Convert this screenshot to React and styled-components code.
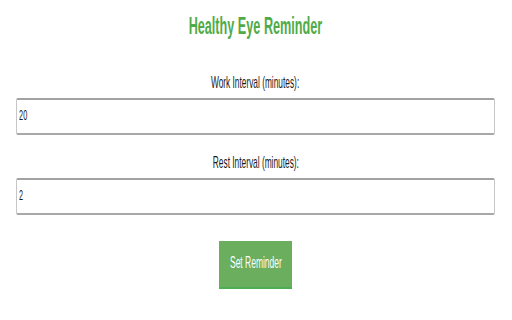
import React, { useState } from "react";
import styled, { createGlobalStyle } from "styled-components";

const GlobalStyle = createGlobalStyle`
  body {
    margin: 0;
    background: #ffffff;
    font-family: "Liberation Sans", Arial, sans-serif;
  }
`;

const Page = styled.div`
  box-sizing: border-box;
  width: 512px;
  height: 320px;
  padding: 14px 17px 0 16px;
  display: flex;
  flex-direction: column;
  overflow: hidden;
`;

// the screenshot is squeezed sideways, so text is narrowed to match
const Squeeze = styled.span`
  display: inline-block;
  white-space: nowrap;
  transform: scaleX(${(p) => p.$x});
  transform-origin: center;
`;

const Title = styled.h1`
  margin: 0 0 35px;
  height: 24px;
  line-height: 24px;
  font-size: 23px;
  font-weight: bold;
  text-align: center;
  color: #4fab48;
`;

const Label = styled.label`
  display: flex;
  justify-content: center;
  margin-top: ${(p) => p.$top || 0}px;
  margin-bottom: 5px;
  height: 20px;
  line-height: 20px;
  font-size: 17px;
  color: #1a1a1a;
`;

const Field = styled.div`
  box-sizing: border-box;
  height: 37px;
  border: 1px solid #c6c6c6;
  border-top: 2px solid #a2a2a2;
  border-bottom: 2px solid #a8a8a8;
  border-radius: 2px;
  overflow: hidden;
`;

const Input = styled.input`
  box-sizing: border-box;
  width: 192.3%;
  height: 33px;
  margin: 0;
  padding: 0 0 3px 4px;
  border: none;
  outline: none;
  background: transparent;
  font-family: "Liberation Sans", Arial, sans-serif;
  font-size: 14px;
  color: #1a1a1a;
  transform: scaleX(0.52);
  transform-origin: left center;
`;

const Actions = styled.div`
  display: flex;
  justify-content: center;
  margin-top: 26px;
`;

const Button = styled.button`
  box-sizing: border-box;
  width: 73px;
  height: 48px;
  padding: 12px 0 14px;
  display: flex;
  justify-content: center;
  border: none;
  border-bottom: 2px solid #4caf50;
  background: #6aae5e;
  color: #ffffff;
  font-family: "Liberation Sans", Arial, sans-serif;
  font-size: 16px;
  line-height: 20px;
  cursor: pointer;
`;

export default function App() {
  const [work, setWork] = useState("20");
  const [rest, setRest] = useState("2");

  return (
    <>
      <GlobalStyle />
      <Page>
        <Title>
          <Squeeze $x={0.55}>Healthy Eye Reminder</Squeeze>
        </Title>
        <Label htmlFor="work">
          <Squeeze $x={0.49}>Work Interval (minutes):</Squeeze>
        </Label>
        <Field>
          <Input
            id="work"
            type="text"
            value={work}
            onChange={(e) => setWork(e.target.value)}
          />
        </Field>
        <Label htmlFor="rest" $top={18}>
          <Squeeze $x={0.49}>Rest Interval (minutes):</Squeeze>
        </Label>
        <Field>
          <Input
            id="rest"
            type="text"
            value={rest}
            onChange={(e) => setRest(e.target.value)}
          />
        </Field>
        <Actions>
          <Button type="button">
            <Squeeze $x={0.53}>Set Reminder</Squeeze>
          </Button>
        </Actions>
      </Page>
    </>
  );
}
